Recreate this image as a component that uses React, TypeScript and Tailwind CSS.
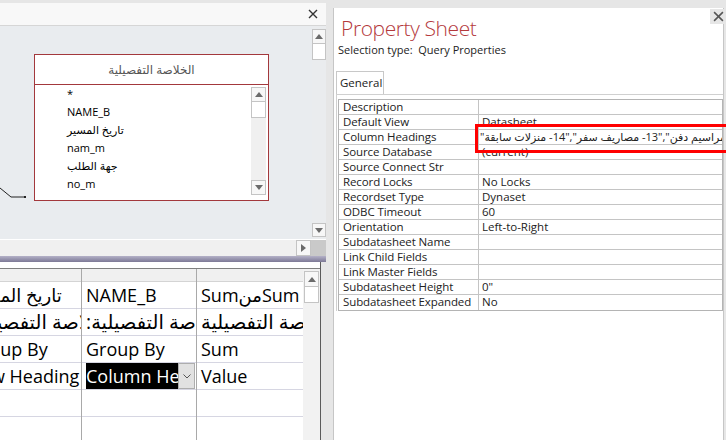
import React from "react";

const FONT = "font-['Open_Sans','DejaVu_Sans',sans-serif]";

function CloseX({ size = 10, color = "#333" }: { size?: number; color?: string }) {
  return (
    <svg width={size} height={size} viewBox="0 0 10 10">
      <path d="M1 1 L9 9 M9 1 L1 9" stroke={color} strokeWidth="1.4" fill="none" />
    </svg>
  );
}

function Tri({ dir }: { dir: "up" | "down" | "right" }) {
  if (dir === "right") {
    return (
      <svg width="5" height="8" viewBox="0 0 5 8">
        <polygon points="0,0 5,4 0,8" fill="#6b6b6b" />
      </svg>
    );
  }
  return (
    <svg width="8" height="5" viewBox="0 0 8 5">
      <polygon points={dir === "up" ? "0,5 4,0 8,5" : "0,0 8,0 4,5"} fill="#6b6b6b" />
    </svg>
  );
}

function ScrollBtn({ dir, className = "" }: { dir: "up" | "down" | "right"; className?: string }) {
  return (
    <div className={`flex shrink-0 items-center justify-center border border-[#c4c4c4] bg-[#f7f7f7] ${className}`}>
      <Tri dir={dir} />
    </div>
  );
}

const fields = ["*", "NAME_B", "تاريخ المسير", "nam_m", "جهة الطلب", "no_m"];

const HEADINGS = '"12- مراسيم دفن","13- مصاريف سفر","14- منزلات سابقة"';

const props: [string, string][] = [
  ["Description", ""],
  ["Default View", "Datasheet"],
  ["Column Headings", HEADINGS],
  ["Source Database", "(current)"],
  ["Source Connect Str", ""],
  ["Record Locks", "No Locks"],
  ["Recordset Type", "Dynaset"],
  ["ODBC Timeout", "60"],
  ["Orientation", "Left-to-Right"],
  ["Subdatasheet Name", ""],
  ["Link Child Fields", ""],
  ["Link Master Fields", ""],
  ["Subdatasheet Height", '0"'],
  ["Subdatasheet Expanded", "No"],
];

const TABLE = "الخلاصة التفصيلية";

const columns = [
  { w: "w-[117px]", cells: ["تاريخ المسير", ":" + TABLE, "Group By", "Row Heading", "", ""] },
  { w: "w-[115px]", cells: ["NAME_B", ":" + TABLE, "Group By", "", "", ""] },
  { w: "w-[140px]", cells: ["SumمنSum", TABLE, "Sum", "Value", "", ""] },
];

function GridColumn({ w, cells, index }: { w: string; cells: string[]; index: number }) {
  return (
    <div className={`flex shrink-0 flex-col border-r border-[#a9a9a9] ${w}`}>
      <div className="h-[13px] shrink-0 border-b border-[#d4d4d4] bg-[#f0f0f0]" />
      {cells.map((c, i) => (
        <div
          key={i}
          className={`flex h-[27px] shrink-0 items-center overflow-hidden whitespace-nowrap border-b border-[#d6d6e2] pl-[4px] leading-none text-black ${
            i === 1 ? "text-[19.5px]" : "text-[18px]"
          }`}
        >
          {index === 1 && i === 3 ? (
            <div className="flex h-full w-full items-stretch">
              <div className="flex w-[93px] items-center overflow-hidden bg-black text-white">Column Heading</div>
              <div className="mr-[1px] flex w-[17px] items-center justify-center border border-[#adadad] bg-[#e1e1e1]">
                <svg width="8" height="5" viewBox="0 0 8 5">
                  <path d="M0.5 0.5 L4 4 L7.5 0.5" stroke="#555" strokeWidth="1" fill="none" />
                </svg>
              </div>
            </div>
          ) : (
            c
          )}
        </div>
      ))}
    </div>
  );
}

export default function App() {
  return (
    <div className={`flex h-[440px] w-[726px] overflow-hidden bg-[#e6e6e6] ${FONT}`}>
      {/* query designer */}
      <div className="flex w-[326px] shrink-0 flex-col pt-[3px]">
        <div className="flex h-[23px] shrink-0 items-center justify-end border-b border-[#d6d6d6] bg-[#f8f8f8] pr-[8px]">
          <CloseX />
        </div>
        <div className="flex h-[213px] shrink-0 bg-[#e9ecef]">
          <div className="relative flex-1">
            <div className="absolute left-[34px] top-[28px] flex h-[147px] w-[235px] flex-col border border-[#a3383c] bg-white">
              <div className="flex h-[30px] items-center justify-center border-b border-[#a3383c] text-[12px] text-[#555]">
                {TABLE}
              </div>
              <div className="flex flex-1">
                <div className="flex flex-1 flex-col pl-[32px] text-[11px] leading-[18px] text-black">
                  {fields.map((f) => (
                    <div key={f} className="h-[18px]">
                      {f}
                    </div>
                  ))}
                </div>
                <div className="mb-[5px] mr-[2px] mt-[2px] flex w-[15px] flex-col bg-[#f0f0f0]">
                  <ScrollBtn dir="up" className="h-[15px]" />
                  <div className="h-[16px] border border-t-0 border-[#c4c4c4] bg-white" />
                  <div className="flex-1" />
                  <ScrollBtn dir="down" className="h-[15px]" />
                </div>
              </div>
            </div>
            <svg className="absolute left-0 top-[160px]" width="30" height="16" viewBox="0 0 30 16">
              <path d="M0 2 L11 11 L25 11" stroke="#222" strokeWidth="1" fill="none" />
              <rect x="24" y="10" width="2" height="2" fill="#222" />
            </svg>
          </div>
          <div className="flex w-[14px] flex-col bg-[#eaecee] pb-[2px] pt-[3px]">
            <ScrollBtn dir="up" className="h-[15px]" />
            <div className="h-[16px] border border-t-0 border-[#c4c4c4] bg-white" />
            <div className="flex-1" />
            <ScrollBtn dir="down" className="h-[14px]" />
          </div>
        </div>
        <div className="flex h-[17px] shrink-0 border-t border-white bg-[#f0f0f0]">
          <div className="flex-1" />
          <ScrollBtn dir="right" className="w-[15px]" />
          <div className="w-[15px] bg-[#c9c9c9]" />
        </div>
        <div className="h-[6px] shrink-0 bg-gradient-to-b from-[#b4b1c8] to-[#7d7996]" />
        <div className="flex min-h-0 w-[321px] flex-1 flex-col border-r border-[#5a5a5a] bg-white pt-[6px]">
          <div className="flex min-h-0 flex-1 overflow-hidden border-t border-[#7f7f7f]">
            <div className="flex-1 overflow-hidden">
              <div className="ml-[-35px] flex">
                {columns.map((c, i) => (
                  <GridColumn key={i} w={c.w} cells={c.cells} index={i} />
                ))}
              </div>
            </div>
            <div className="flex w-[17px] flex-col bg-[#f2f2f2] px-[1px] pt-[2px]">
              <ScrollBtn dir="up" className="h-[16px]" />
              <div className="h-[16px] border border-t-0 border-[#c4c4c4] bg-white" />
            </div>
          </div>
        </div>
      </div>

      {/* property sheet */}
      <div className="relative ml-[7px] mt-[8px] w-[391px] shrink-0 border-x border-[#c6c6c6] bg-white">
        <div className="absolute right-[-3px] top-[1px] flex h-[15px] w-[16px] items-center justify-center bg-[#e6e6e6]">
          <CloseX size={11} color="#555" />
        </div>
        <div className="pl-[7px] pt-[5px] text-[21px] font-light leading-[30px] tracking-[-0.4px] text-[#b4393c]">
          Property Sheet
        </div>
        <div className="pl-[4px] text-[11px] leading-[14px] text-[#222]">
          Selection type:&nbsp;&nbsp;Query Properties
        </div>
        <div className="ml-[2px] mt-[14px] flex">
          <div className="flex h-[23px] w-[48px] items-center border border-b-0 border-[#c8c8c8] pl-[3px] text-[11.5px] text-[#222]">
            General
          </div>
        </div>
        <div className="ml-[2px] border-l border-t border-[#d0d0d0] pl-[1px] pt-[4px]">
          <div className="border border-[#b4b4b4]">
            {props.map(([k, v], i) => (
              <div
                key={k}
                className={`flex h-[15px] text-[11.5px] leading-[14px] text-[#222] ${i < props.length - 1 ? "border-b border-[#c4c4c4]" : ""}`}
              >
                <div className="w-[140px] shrink-0 border-r border-[#c4c4c4] pl-[4px] tracking-[-0.1px]">{k}</div>
                <div className="flex flex-1 overflow-hidden whitespace-nowrap pl-[1px]">
                  {i === 2 ? (
                    <span dir="rtl" className="shrink-0 text-[11px]">
                      {v}
                    </span>
                  ) : (
                    <span className="pl-[2px]">{v}</span>
                  )}
                </div>
              </div>
            ))}
          </div>
        </div>
        <div className="absolute left-[141px] top-[116px] h-[29px] w-[270px] border-[3px] border-[#ff0000]" />
      </div>
    </div>
  );
}
